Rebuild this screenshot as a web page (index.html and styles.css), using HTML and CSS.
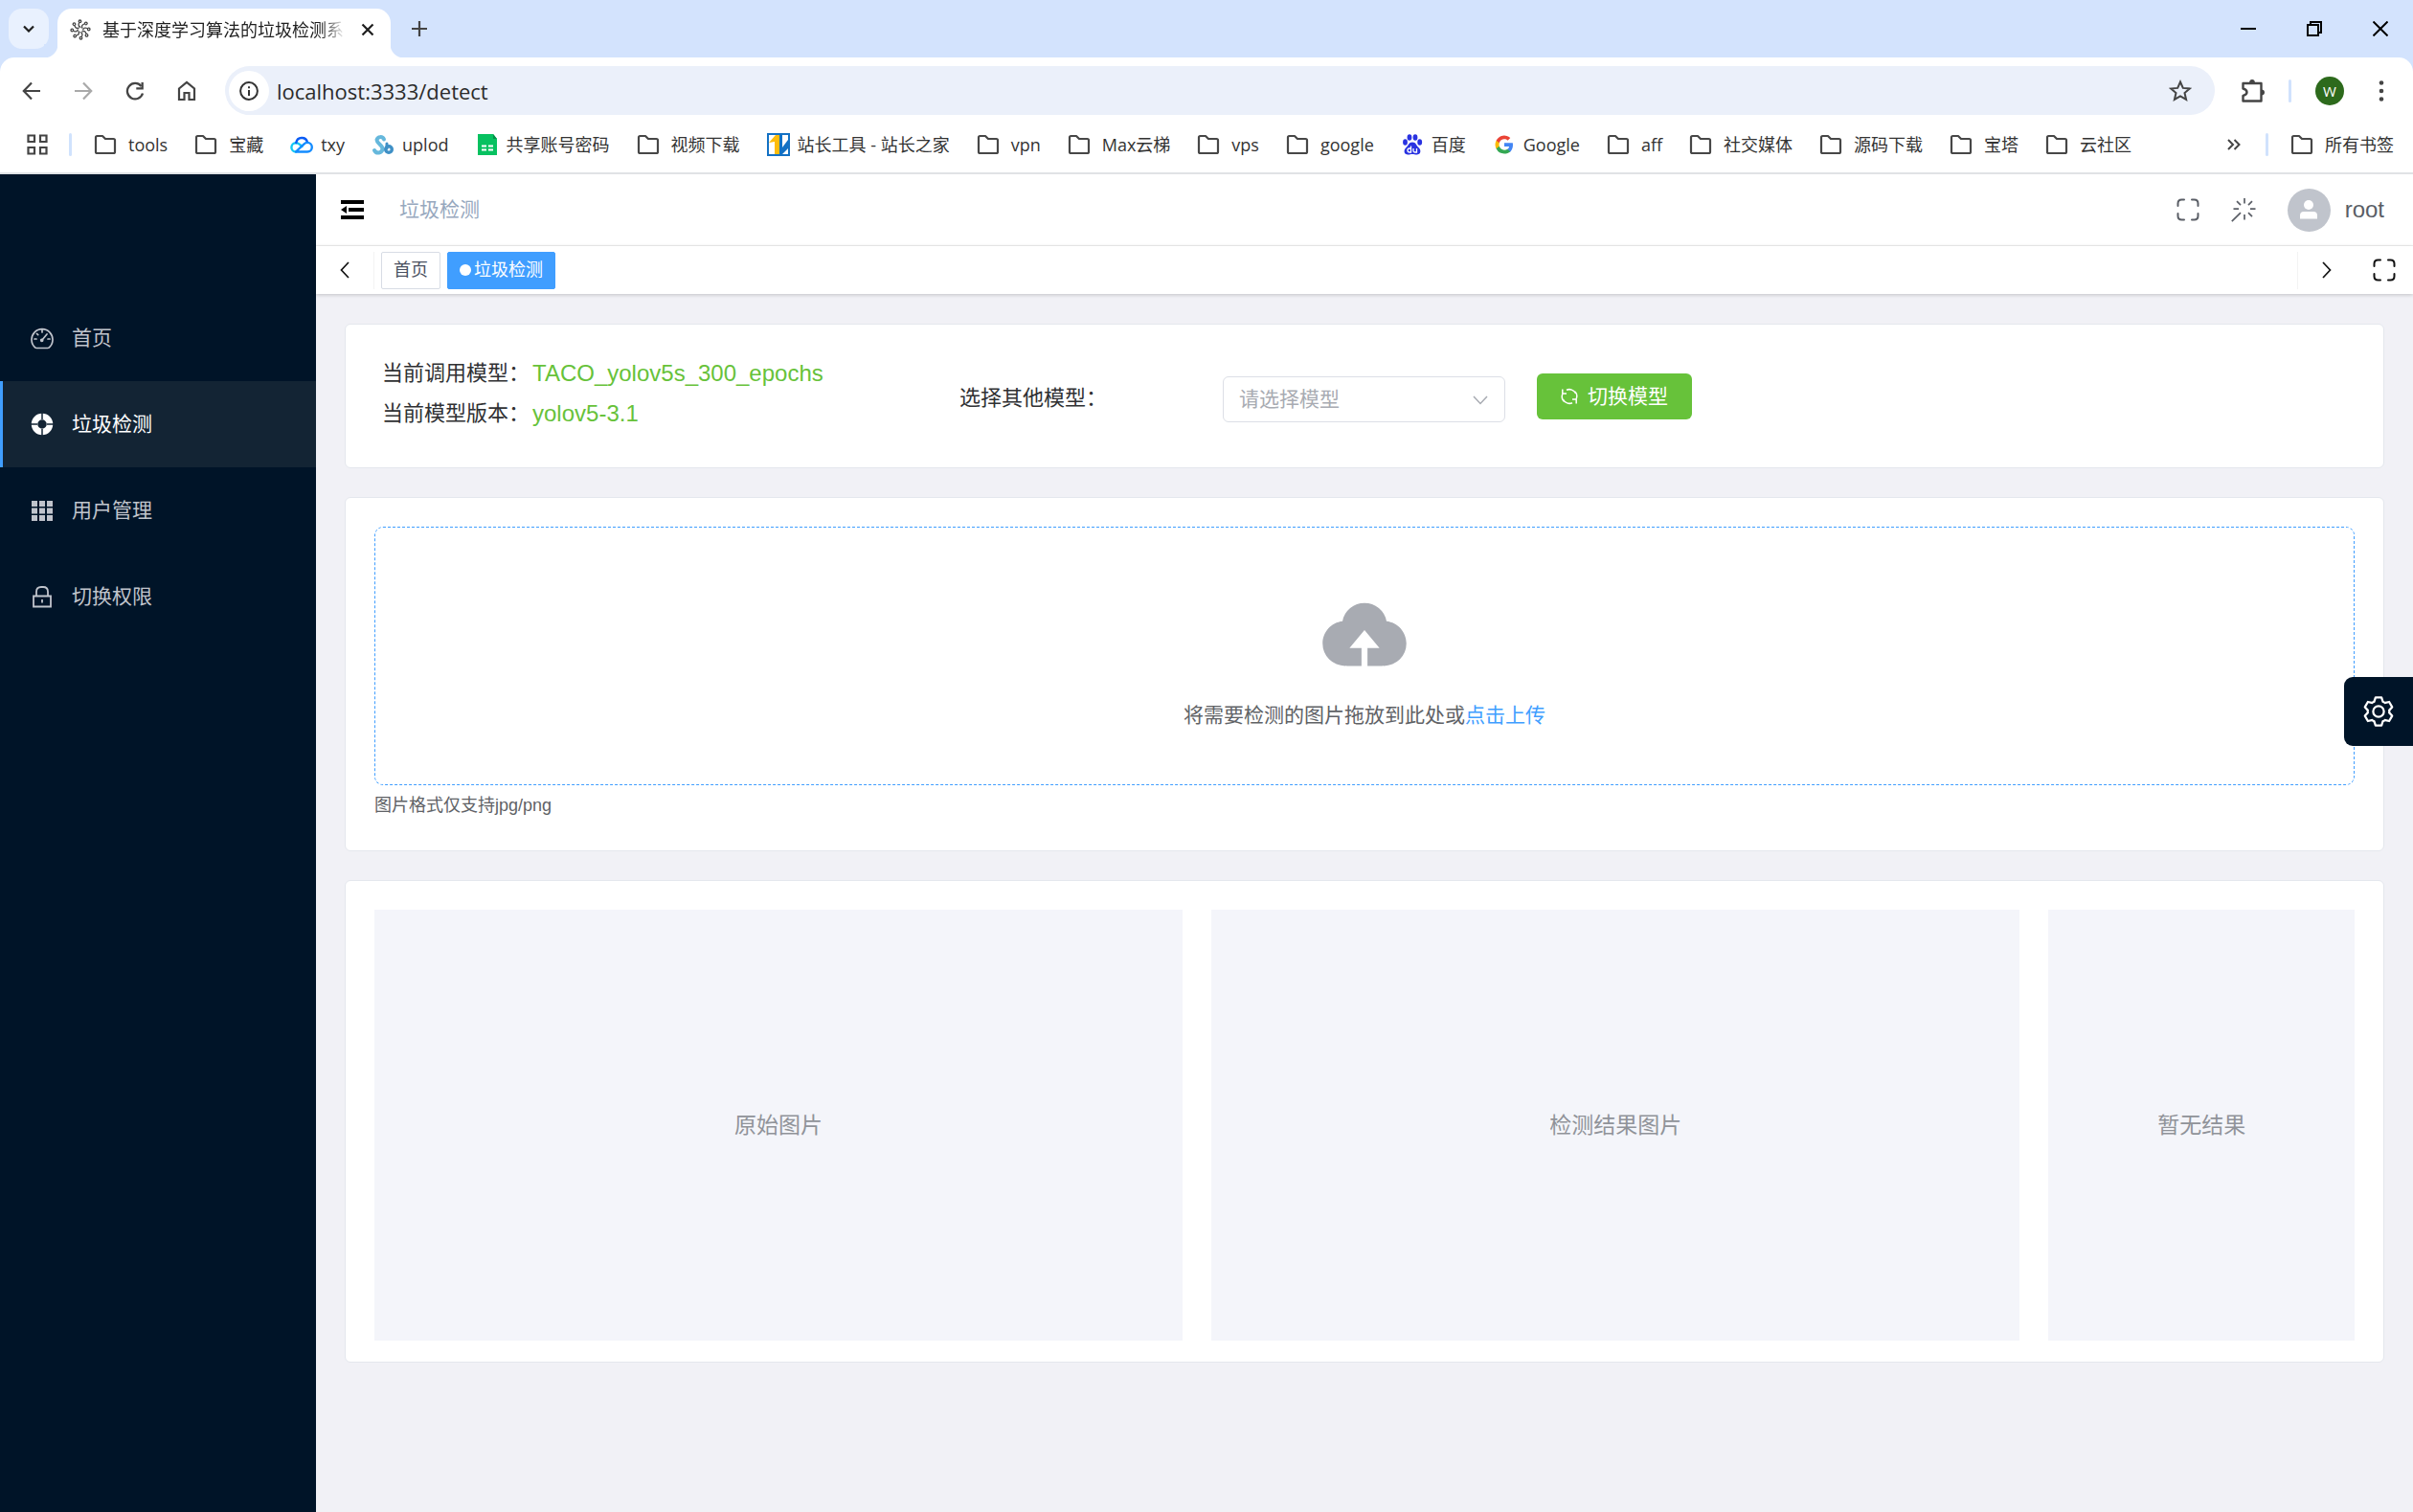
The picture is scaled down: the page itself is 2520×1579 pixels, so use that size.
FILE: index.html
```html
<!DOCTYPE html>
<html lang="zh-CN">
<head>
<meta charset="utf-8">
<meta name="viewport" content="width=device-width, initial-scale=1">
<title>基于深度学习算法的垃圾检测系统</title>
<link rel="stylesheet" href="styles.css">
</head>
<body>
<svg class="defs" aria-hidden="true">
  <symbol id="folder" viewBox="0 0 24 24"><path d="M2 19.500V4.500Q2 3 3.500 3H9l3 3h8.500Q22 6 22 7.500v12Q22 21 20.500 21h-17Q2 21 2 19.500z" fill="none" stroke="currentColor" stroke-width="2.200" stroke-linejoin="round"/></symbol>
  <symbol id="full" viewBox="0 0 24 24"><path d="M1.500 8V5.500Q1.500 1.500 5.500 1.500H8M16 1.500h2.500q4 0 4 4V8M22.500 16v2.500q0 4-4 4H16M8 22.500H5.500q-4 0-4-4V16" fill="none" stroke="currentColor" stroke-width="2" stroke-linecap="round"/></symbol>
</svg>

<header class="browser">
  <div class="tabstrip">
    <button class="tab-search" aria-label="搜索标签页"><svg width="12" height="8" viewBox="0 0 12 8"><path d="M1 1.500l5 5 5-5" fill="none" stroke="#1f1f1f" stroke-width="2.200"/></svg></button>
    <div class="tab">
      <svg class="tab-icon" width="22" height="22" viewBox="0 0 22 22" fill="none" stroke="#444" stroke-width="1.300">
        <g id="arm"><path d="M11.500 8.500q-3.500-1-2-4.500"/><circle cx="10.500" cy="2.300" r="1.300"/></g>
        <use href="#arm" transform="rotate(45 11 11)"/><use href="#arm" transform="rotate(90 11 11)"/><use href="#arm" transform="rotate(135 11 11)"/><use href="#arm" transform="rotate(180 11 11)"/><use href="#arm" transform="rotate(225 11 11)"/><use href="#arm" transform="rotate(270 11 11)"/><use href="#arm" transform="rotate(315 11 11)"/>
      </svg>
      <span class="tab-title">基于深度学习算法的垃圾检测系</span>
      <button class="plain" aria-label="关闭标签页"><svg width="14" height="14" viewBox="0 0 14 14"><path d="M1.500 1.500l11 11m0-11l-11 11" stroke="#1f1f1f" stroke-width="2.200"/></svg></button>
    </div>
    <button class="plain new-tab" aria-label="新标签页"><svg width="16" height="16" viewBox="0 0 16 16"><path d="M8 0v16M0 8h16" stroke="#444" stroke-width="2.200"/></svg></button>
    <div class="window-buttons">
      <button class="plain" aria-label="最小化"><svg width="16" height="16" viewBox="0 0 16 16"><path d="M0 8h16" stroke="#000" stroke-width="2"/></svg></button>
      <button class="plain" aria-label="还原"><svg width="16" height="16" viewBox="0 0 16 16"><path d="M1 4h11v11H1zM4 4V1h11v11h-3" fill="none" stroke="#000" stroke-width="2"/></svg></button>
      <button class="plain" aria-label="关闭"><svg width="16" height="16" viewBox="0 0 16 16"><path d="M.5.500l15 15m0-15l-15 15" stroke="#000" stroke-width="2"/></svg></button>
    </div>
  </div>

  <div class="toolbar">
    <div class="nav-buttons">
      <button class="plain" aria-label="后退"><svg width="20" height="20" viewBox="0 0 20 20"><path d="M19 10H2.500M10 1.500L1.800 10 10 18.500" fill="none" stroke="#444" stroke-width="2.200"/></svg></button>
      <button class="plain" aria-label="前进"><svg width="20" height="20" viewBox="0 0 20 20"><path d="M1 10h16.500M10 1.500l8.200 8.500-8.200 8.500" fill="none" stroke="#a9a9a9" stroke-width="2.200"/></svg></button>
      <button class="plain" aria-label="重新加载"><svg width="20" height="20" viewBox="0 0 20 20"><path d="M18 12.500A8.200 8.200 0 1 1 16.500 5" fill="none" stroke="#444" stroke-width="2.300"/><path d="M18.800 1v7.500h-7.500V6.200h5.200V1z" fill="#444"/></svg></button>
      <button class="plain" aria-label="主页"><svg width="20" height="22" viewBox="0 0 20 22"><path d="M2 8.500l8-6.500 8 6.500V20h-5.500v-7h-5v7H2z" fill="none" stroke="#444" stroke-width="2.200"/></svg></button>
    </div>
    <div class="address">
      <button class="site-info" aria-label="查看网站信息"><svg width="20" height="20" viewBox="0 0 20 20"><circle cx="10" cy="10" r="8.900" fill="none" stroke="#333" stroke-width="2"/><path d="M10 9v6M10 5.200v2" stroke="#333" stroke-width="2"/></svg></button>
      <input class="url" type="text" value="localhost:3333/detect" aria-label="地址栏">
      <button class="plain" aria-label="加入书签"><svg width="24" height="24" viewBox="0 0 24 24"><path d="M12 2.500l2.800 6.400 7 .6-5.300 4.600 1.600 6.800-6.100-3.600-6.100 3.600 1.600-6.800-5.300-4.600 7-.6z" fill="none" stroke="#444" stroke-width="2"/></svg></button>
    </div>
    <button class="plain extensions" aria-label="扩展程序"><svg width="26" height="26" viewBox="0 0 26 26"><path d="M2.500 5h19v18.500h-19v-5.500q4-1 4-3.700t-4-3.800z" fill="none" stroke="#444" stroke-width="2.400" stroke-linejoin="round"/><path d="M9 5a3 4 0 0 1 6 0zM21.500 11.500a3.500 3 0 0 1 0 6z" fill="#444"/></svg></button>
    <span class="divider"></span>
    <button class="profile" aria-label="个人资料">W</button>
    <button class="plain" aria-label="菜单"><svg width="6" height="22" viewBox="0 0 6 22" fill="#444"><circle cx="3" cy="2.500" r="2.300"/><circle cx="3" cy="11" r="2.300"/><circle cx="3" cy="19.500" r="2.300"/></svg></button>
  </div>

  <nav class="bookmarks" aria-label="书签栏">
    <button class="plain" aria-label="应用"><svg width="22" height="22" viewBox="0 0 22 22" fill="none" stroke="#444" stroke-width="2.200"><path d="M1.500 1.500h6.500v6.500H1.500zM14 1.500h6.500v6.500H14zM1.500 14h6.500v6.500H1.500zM14 14h6.500v6.500H14z"/></svg></button>
    <span class="divider"></span>
    <div class="bookmark-list">
      <a href="#"><svg class="ic"><use href="#folder"/></svg>tools</a>
      <a href="#"><svg class="ic"><use href="#folder"/></svg>宝藏</a>
      <a href="#" class="site"><svg class="ic" viewBox="0 0 24 24" fill="none" stroke-width="2.400" stroke-linejoin="round" stroke-linecap="round"><path d="M6 19.500a4.600 4.600 0 0 1 0-9.200q2.200 0 4 1.500l2.500 2.200" stroke="#12c8f4"/><path d="M6.300 10a6 6 0 0 1 11.700-.5" stroke="#0a5cf5"/><path d="M6 19.500h12a4.800 4.800 0 0 0 0-9.600q-2 0-3.700 1.700L6.500 19" stroke="#148cff"/></svg>txy</a>
      <a href="#" class="site"><svg class="ic" viewBox="0 0 24 24" fill="none" stroke-width="4" stroke-linecap="round"><path d="M13 6.500A4 4 0 0 0 5.500 7C5.500 11 11.500 12 11.500 16.500a4.500 4.500 0 0 1-8.500 1.500" stroke="#66b8dc"/><circle cx="18" cy="17" r="3.300" stroke="#3f90c6" stroke-width="3.400"/><path d="M16 11v5" stroke="#3f90c6" stroke-width="3"/></svg>uplod</a>
      <a href="#" class="site"><svg class="ic" viewBox="0 0 24 24"><path d="M2 1h16l4 5v17H2z" fill="#07c160"/><path d="M18 1l4 5h-4z" fill="#058f49"/><path d="M6 12.500h5v2H6zM13 12.500h5v2h-5zM6 16.500h5v2H6zM13 16.500h5v2h-5z" fill="#fff"/></svg>共享账号密码</a>
      <a href="#"><svg class="ic"><use href="#folder"/></svg>视频下载</a>
      <a href="#" class="site"><svg class="ic" viewBox="0 0 24 24"><path d="M1 1h22v22H1z" fill="#fff" stroke="#1371c4" stroke-width="2"/><path d="M2 10l7-8h4v20H8V9z" fill="#fdbc0b"/><path d="M13 2h3v13l6-8v9l-6 6h-3z" fill="#1371c4"/></svg>站长工具 - 站长之家</a>
      <a href="#"><svg class="ic"><use href="#folder"/></svg>vpn</a>
      <a href="#"><svg class="ic"><use href="#folder"/></svg>Max云梯</a>
      <a href="#"><svg class="ic"><use href="#folder"/></svg>vps</a>
      <a href="#"><svg class="ic"><use href="#folder"/></svg>google</a>
      <a href="#" class="site"><svg class="ic" viewBox="0 0 24 24" fill="#2932e1"><ellipse cx="4.500" cy="9.500" rx="2.400" ry="3.200"/><ellipse cx="9" cy="4.500" rx="2.400" ry="3.300"/><ellipse cx="15" cy="4.500" rx="2.400" ry="3.300"/><ellipse cx="19.700" cy="9.500" rx="2.400" ry="3.200"/><path d="M12 9.500c4 0 4 3.500 6.500 5.500s3 7-1.500 7.500c-2 .2-3-.6-5-.6s-3 .8-5 .6c-4.500-.5-4-5.500-1.500-7.500S8 9.500 12 9.500z"/><path d="M10.500 13.500v6.500H9a1.900 1.900 0 0 1 0-4h1.500M13 16v2.500q0 1.500 1.500 1.500H16.500v-4" fill="none" stroke="#fff" stroke-width="1.300"/></svg>百度</a>
      <a href="#" class="site"><svg class="ic" viewBox="0 0 24 24"><path d="M21 12.200c0-.7-.1-1.300-.2-1.900H12v3.700h5.100c-.2 1.200-.9 2.200-1.900 2.900v2.500h3.100c1.700-1.700 2.700-4.200 2.700-7.200z" fill="#4285f4"/><path d="M12 21.500c2.500 0 4.700-.8 6.300-2.300l-3.100-2.400c-.8.600-1.900.9-3.200.9-2.400 0-4.500-1.600-5.200-3.900H3.600v2.500a9.500 9.500 0 0 0 8.400 5.200z" fill="#34a853"/><path d="M6.800 13.800a5.800 5.800 0 0 1 0-3.600V7.700H3.600a9.500 9.500 0 0 0 0 8.600z" fill="#fbbc05"/><path d="M12 6.300c1.400 0 2.600.5 3.600 1.400l2.700-2.700A9.500 9.500 0 0 0 3.600 7.700l3.200 2.500C7.500 7.900 9.600 6.300 12 6.300z" fill="#ea4335"/></svg>Google</a>
      <a href="#"><svg class="ic"><use href="#folder"/></svg>aff</a>
      <a href="#"><svg class="ic"><use href="#folder"/></svg>社交媒体</a>
      <a href="#"><svg class="ic"><use href="#folder"/></svg>源码下载</a>
      <a href="#"><svg class="ic"><use href="#folder"/></svg>宝塔</a>
      <a href="#"><svg class="ic"><use href="#folder"/></svg>云社区</a>
    </div>
    <button class="plain more" aria-label="更多书签"><svg width="14" height="12" viewBox="0 0 14 12"><path d="M1 1l5 5-5 5M7.500 1l5 5-5 5" fill="none" stroke="#444" stroke-width="2"/></svg></button>
    <span class="divider"></span>
    <a href="#"><svg class="ic"><use href="#folder"/></svg>所有书签</a>
  </nav>
</header>

<div class="app">
  <aside class="sidebar">
    <nav class="menu">
      <a href="#"><svg width="24" height="24" viewBox="0 0 24 24" fill="none" stroke="currentColor" stroke-width="1.700" stroke-linecap="round"><path d="M4.800 22A11 11 0 1 1 19.200 22q-.5.500-1.500.5H6.300q-1 0-1.500-.5zM12 4v2M4 13h2M18 13h2M6.500 7.500l1.200 1.200M12 14l5-6"/><circle cx="11.700" cy="14.300" r="1"/></svg>首页</a>
      <a href="#" class="active" aria-current="page"><svg width="24" height="24" viewBox="0 0 24 24"><circle cx="12" cy="12" r="8" fill="none" stroke="currentColor" stroke-width="6.500"/><path d="M12 0v7M12 17v7M0 12h7M17 12h7" stroke="#132434" stroke-width="1.500"/></svg>垃圾检测</a>
      <a href="#"><svg width="24" height="24" viewBox="0 0 24 24" fill="currentColor"><path d="M1 2h6v6H1zM9 2h6v6H9zM17 2h6v6h-6zM1 9.500h6v6H1zM9 9.500h6v6H9zM17 9.500h6v6h-6zM1 17h6v6H1zM9 17h6v6H9zM17 17h6v6h-6z"/></svg>用户管理</a>
      <a href="#"><svg width="24" height="24" viewBox="0 0 24 24" fill="none" stroke="currentColor" stroke-width="1.800"><path d="M3 11.500h18v11H3zM6 11.500V7q0-5 5-5h2q5 0 5 5v4.500M12 15v3.500"/></svg>切换权限</a>
    </nav>
  </aside>

  <div class="page">
    <div class="topbar">
      <button class="plain" aria-label="收起菜单"><svg width="24" height="20" viewBox="0 0 24 20"><path d="M0 0h24v4H0zM8 8h16v4H8zM0 16h24v4H0zM0 10l6-4v8z"/></svg></button>
      <span class="crumb">垃圾检测</span>
      <button class="plain tool" aria-label="全屏"><svg width="24" height="24"><use href="#full"/></svg></button>
      <button class="plain tool" aria-label="主题"><svg width="26" height="26" viewBox="0 0 26 26" fill="none" stroke="currentColor" stroke-width="1.700"><path d="M14 1v5.500M14 18v5.500M20 12.200h5.500M2.500 12.200H8M18 8.200l4-4M10 8.200l-4-4M18 16.200l4 4M10 16.200L.8 25.200"/></svg></button>
      <button class="user"><span class="avatar"><svg width="20" height="20" viewBox="0 0 20 20" fill="#fff"><circle cx="10" cy="5" r="5"/><path d="M1 19.500v-3.500q0-4 4-4h10q4 0 4 4v3.500z"/></svg></span>root</button>
    </div>
    <nav class="tags">
      <button class="plain arrow" aria-label="向左"><svg width="10" height="18" viewBox="0 0 10 18"><path d="M9 1L1.500 9 9 17" fill="none" stroke="#111" stroke-width="1.700"/></svg></button>
      <div class="tag-list">
        <a href="#" class="tag">首页</a>
        <a href="#" class="tag current">垃圾检测</a>
      </div>
      <button class="plain arrow" aria-label="向右"><svg width="10" height="18" viewBox="0 0 10 18"><path d="M1 1l7.500 8L1 17" fill="none" stroke="#111" stroke-width="1.700"/></svg></button>
      <button class="plain arrow" aria-label="内容全屏"><svg width="24" height="24"><use href="#full"/></svg></button>
    </nav>

    <main class="content">
      <section class="card model">
        <dl class="model-info">
          <div><dt>当前调用模型：</dt><dd>TACO_yolov5s_300_epochs</dd></div>
          <div><dt>当前模型版本：</dt><dd>yolov5-3.1</dd></div>
        </dl>
        <label class="picker-label" for="model">选择其他模型：</label>
        <div class="picker">
          <select id="model"><option>请选择模型</option></select>
          <svg class="chevron" width="16" height="10" viewBox="0 0 16 10"><path d="M1 1l7 7.500L15 1" fill="none" stroke="#a8abb2" stroke-width="1.500"/></svg>
        </div>
        <button class="switch"><svg width="18" height="18" viewBox="0 0 18 18" fill="none" stroke="#fff" stroke-width="1.500"><path d="M1.500 6h4.500M1.800 1.500V6M3 14A7.500 7.500 0 0 1 2 6M6 2.200a7.500 7.500 0 0 1 9.500 3.500M16.500 12H12M16.200 16.500V12M15 4a7.500 7.500 0 0 1 1 8M12 15.800A7.500 7.500 0 0 1 2.500 12.300"/></svg>切换模型</button>
      </section>

      <section class="card">
        <div class="dropzone">
          <svg class="cloud" width="100" height="100" viewBox="0 0 1024 1024" fill="#a8abb2"><path d="M544 864V672h128L512 480 352 672h128v192H320v-1.600c-5.376.32-10.496 1.600-16 1.600A240 240 0 0 1 64 624c0-123.136 93.120-223.488 212.608-237.248A239.808 239.808 0 0 1 512 192a239.872 239.872 0 0 1 235.456 194.752c119.488 13.760 212.480 114.112 212.480 237.248a240 240 0 0 1-240 240c-5.376 0-10.560-1.280-16-1.600v1.600H544z"/></svg>
          <p>将需要检测的图片拖放到此处或<a href="#">点击上传</a></p>
        </div>
        <p class="hint">图片格式仅支持jpg/png</p>
      </section>

      <section class="card results">
        <div class="slot wide">原始图片</div>
        <div class="slot wide">检测结果图片</div>
        <div class="slot">暂无结果</div>
      </section>
    </main>
  </div>
</div>

<button class="settings" aria-label="设置"><svg width="36" height="36" viewBox="0 0 1024 1024" fill="#fff"><path d="M600.704 64a32 32 0 0 1 30.464 22.208l35.200 109.376c14.784 7.232 28.928 15.360 42.432 24.512l112.384-24.192a32 32 0 0 1 34.432 15.360L944.320 364.800a32 32 0 0 1-4.032 37.504l-77.120 85.120a357.120 357.120 0 0 1 0 49.024l77.120 85.248a32 32 0 0 1 4.032 37.504l-88.704 153.600a32 32 0 0 1-34.432 15.296L708.800 803.904c-13.440 9.088-27.648 17.280-42.368 24.512l-35.264 109.376A32 32 0 0 1 600.704 960H423.296a32 32 0 0 1-30.464-22.208L357.696 828.480a351.616 351.616 0 0 1-42.560-24.640l-112.320 24.256a32 32 0 0 1-34.432-15.360L79.680 659.200a32 32 0 0 1 4.032-37.504l77.120-85.248a357.120 357.120 0 0 1 0-48.896l-77.120-85.248A32 32 0 0 1 79.680 364.800l88.704-153.600a32 32 0 0 1 34.432-15.296l112.320 24.256c13.568-9.152 27.776-17.408 42.560-24.640l35.200-109.312A32 32 0 0 1 423.232 64H600.640zm-23.424 64H446.720l-36.352 113.088-24.512 11.968a294.113 294.113 0 0 0-34.816 20.096l-22.656 15.360-116.224-25.088-65.280 113.152 79.680 88.192-1.920 27.136a293.120 293.120 0 0 0 0 40.192l1.920 27.136-79.808 88.192 65.344 113.152 116.224-25.024 22.656 15.296a294.113 294.113 0 0 0 34.816 20.096l24.512 11.968L446.720 896h130.688l36.480-113.152 24.448-11.904a288.282 288.282 0 0 0 34.752-20.096l22.592-15.296 116.288 25.024 65.280-113.152-79.744-88.192 1.920-27.136a293.120 293.120 0 0 0 0-40.256l-1.920-27.136 79.808-88.128-65.344-113.152-116.288 24.960-22.592-15.232a287.616 287.616 0 0 0-34.752-20.096l-24.448-11.904L577.344 128zM512 320a192 192 0 1 1 0 384 192 192 0 0 1 0-384zm0 64a128 128 0 1 0 0 256 128 128 0 0 0 0-256z"/></svg></button>
</body>
</html>
```

FILE: styles.css
```css
* { box-sizing: border-box; }

body {
  margin: 0;
  min-height: 100vh;
  display: flex;
  flex-direction: column;
  font-family: "Liberation Sans", "Noto Sans CJK SC", sans-serif;
  font-size: 21px;
  line-height: 24px;
  color: #303133;
}

a { color: inherit; text-decoration: none; }
button, input, select { font: inherit; color: inherit; }
p, dl, dd { margin: 0; }
svg { display: block; flex: none; }
.defs { position: absolute; width: 0; height: 0; }

.plain {
  display: flex;
  padding: 0;
  border: 0;
  background: none;
}

/* browser window */
.browser {
  font-family: "Open Sans", "Noto Sans CJK SC", sans-serif;
  background: #d3e3fd;
  color: #333;
}

.tabstrip {
  display: flex;
  align-items: center;
  height: 60px;
  padding: 9px 14px 0 9px;
}

.tab-search {
  display: grid;
  place-items: center;
  width: 42px;
  height: 42px;
  margin-bottom: 9px;
  padding: 0;
  border: 0;
  border-radius: 14px;
  background: #e9f1fe;
}

.tab {
  position: relative;
  display: flex;
  align-items: center;
  width: 348px;
  height: 51px;
  margin-left: 9px;
  padding: 0 17px 8px 13px;
  border-radius: 15px 15px 0 0;
  background: #fff;
}

.tab::before,
.tab::after {
  content: "";
  position: absolute;
  bottom: 0;
  width: 14px;
  height: 14px;
}
.tab::before { right: 100%; background: radial-gradient(circle at 0 0, #d3e3fd 14px, #fff 15px); }
.tab::after { left: 100%; background: radial-gradient(circle at 100% 0, #d3e3fd 14px, #fff 15px); }

.tab-title {
  flex: 1;
  margin: 0 16px 0 12px;
  white-space: nowrap;
  font-size: 18px;
  color: #1f1f1f;
  mask-image: linear-gradient(90deg, #000 90%, transparent);
}

.new-tab { margin: 0 0 9px 22px; }

.window-buttons {
  display: flex;
  gap: 53px;
  margin: 0 12px 9px auto;
}

.toolbar {
  display: flex;
  align-items: center;
  height: 69px;
  padding: 0 30px 0 23px;
  border-radius: 15px 15px 0 0;
  background: #fff;
}

.nav-buttons {
  display: flex;
  align-items: center;
  gap: 34px;
}

.address {
  flex: 1;
  display: flex;
  align-items: center;
  height: 51px;
  margin: 0 27px 0 30px;
  padding: 0 24px 0 4px;
  border-radius: 26px;
  background: #ebf0fa;
}

.site-info {
  display: grid;
  place-items: center;
  width: 42px;
  height: 42px;
  padding: 0;
  border: 0;
  border-radius: 50%;
  background: #fff;
}

.url {
  flex: 1;
  min-width: 0;
  padding: 0;
  margin-left: 8px;
  border: 0;
  background: none;
  font-size: 22px;
  color: #2b2b2b;
}

.divider {
  flex: none;
  width: 3px;
  height: 24px;
  border-radius: 2px;
  background: #d0e2fd;
}

.profile {
  width: 30px;
  height: 30px;
  margin: 0 36px 0 25px;
  padding: 0;
  border: 0;
  border-radius: 50%;
  background: #2d6a1c;
  color: #fff;
  font-size: 15px;
}
.extensions { margin-right: 24px; }

.bookmarks {
  display: flex;
  align-items: center;
  height: 53px;
  padding: 0 20px 8px 28px;
  border-bottom: 2px solid #e0e2e5;
  background: #fff;
  font-size: 18px;
  white-space: nowrap;
}
.bookmarks .divider { margin: 0 23px 0 22px; }
.bookmarks a { display: flex; align-items: center; gap: 12px; }
.bookmarks a.site { gap: 8px; }
.bookmark-list { display: flex; gap: 28px; }
.ic { width: 24px; height: 24px; color: #474747; }
.more { margin: 0 4px 0 auto; }

/* application */
.app {
  flex: 1;
  display: flex;
  background: #f1f1f6;
}

.sidebar {
  flex: none;
  width: 330px;
  padding-top: 126px;
  background: #001428;
}

.menu a {
  display: flex;
  align-items: center;
  gap: 19px;
  height: 90px;
  padding-left: 32px;
  color: #c0c4cc;
}
.menu .active {
  padding-left: 29px;
  border-left: 3px solid #409eff;
  background: #132434;
  color: #fff;
}

.page { flex: 1; min-width: 0; }

.topbar {
  display: flex;
  align-items: center;
  height: 75px;
  padding: 0 30px 0 26px;
  border-bottom: 1px solid #f0f0f0;
  background: #fff;
}
.crumb { margin: 0 auto 0 37px; color: #97a8be; }
.tool { margin-right: 33px; color: #5a5e66; }

.user {
  display: flex;
  align-items: center;
  gap: 15px;
  padding: 0;
  border: 0;
  background: none;
  font-size: 24px;
  color: #5a5e66;
}
.avatar {
  display: grid;
  place-items: center;
  width: 45px;
  height: 45px;
  border-radius: 50%;
  background: #c0c4cc;
}

.tags {
  position: relative;
  display: flex;
  align-items: center;
  height: 50px;
  background: #fff;
  box-shadow: 0 1px 4px rgba(0, 0, 0, .2);
}
.arrow { justify-content: center; width: 60px; color: #111; }
.tag-list {
  flex: 1;
  display: flex;
  gap: 7px;
  padding-left: 7px;
  border: solid #f3f3f3;
  border-width: 0 1px;
}
.tag {
  display: flex;
  align-items: center;
  height: 39px;
  padding: 0 12px;
  border: 1px solid #d8dce5;
  border-radius: 2px;
  font-size: 18px;
  color: #495060;
}
.tag.current { border-color: #409eff; background: #409eff; color: #fff; }
.tag.current::before {
  content: "";
  width: 12px;
  height: 12px;
  margin-right: 3px;
  border-radius: 50%;
  background: #fff;
}

.content {
  display: flex;
  flex-direction: column;
  gap: 30px;
  padding: 31px 30px;
}

.card {
  padding: 30px;
  border: 1px solid #e4e7ed;
  border-radius: 6px;
  background: #fff;
}

.model {
  display: grid;
  grid-template-columns: 603fr 275fr 328fr 854fr;
  align-items: start;
  padding-left: 38px;
  padding-bottom: 35px;
}
.model-info div { display: flex; line-height: 42px; }
.model-info dt, .picker-label { font-size: 22px; }
.model-info dd { margin-left: 3px; font-size: 24px; color: #67c23a; }
.picker-label { padding-top: 35px; }

.picker {
  position: relative;
  margin: 24px 33px 0 0;
}
.picker select {
  appearance: none;
  width: 100%;
  height: 48px;
  padding: 0 16px;
  border: 1px solid #dcdfe6;
  border-radius: 6px;
  background: #fff;
  color: #a8abb2;
}
.chevron {
  position: absolute;
  top: 20px;
  right: 18px;
  pointer-events: none;
}

.switch {
  display: flex;
  align-items: center;
  justify-self: start;
  gap: 10px;
  height: 48px;
  margin-top: 21px;
  padding: 0 25px;
  border: 0;
  border-radius: 6px;
  background: #67c23a;
  color: #fff;
}

.dropzone {
  display: flex;
  flex-direction: column;
  align-items: center;
  gap: 24px;
  padding: 60px;
  border: 1px dashed #409eff;
  border-radius: 9px;
  color: #606266;
}
.dropzone a { color: #409eff; }
.hint { padding: 9px 0 5px; font-size: 18px; color: #606266; }

.results {
  display: grid;
  grid-template-columns: repeat(24, 1fr);
  gap: 30px;
  padding-bottom: 22px;
}
.slot {
  grid-column: span 4;
  display: grid;
  place-items: center;
  min-height: 450px;
  background: #f4f5fa;
  font-size: 23px;
  color: #909399;
}
.slot.wide { grid-column: span 10; }

.settings {
  position: fixed;
  top: 707px;
  right: 0;
  display: grid;
  place-items: center;
  width: 72px;
  height: 72px;
  padding: 0;
  border: 0;
  border-radius: 9px 0 0 9px;
  background: #001428;
}
```
